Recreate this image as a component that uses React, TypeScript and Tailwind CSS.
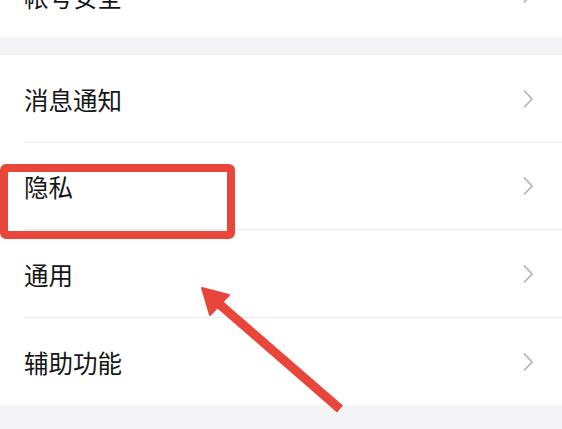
const groups = [['帐号安全'], ['消息通知', '隐私', '通用', '辅助功能']];

function Chevron() {
  return (
    <svg width="12" height="20" viewBox="0 0 12 20" className="text-[#b4b4b4]">
      <polyline points="2,1.5 10,10 2,18.5" fill="none" stroke="currentColor" strokeWidth="1.7" />
    </svg>
  );
}

function Row({ label, last, tall, top }: { label: string; last: boolean; tall?: boolean; top?: boolean }) {
  return (
    <div className="pl-6">
      <div
        className={`flex items-center justify-between pr-[28px] ${tall ? 'h-[88px]' : 'h-[87px]'} ${
          last ? '' : 'border-b border-[#ebebeb]'
        }`}
      >
        <span className={`${top ? 'pt-[8px]' : 'pt-[3px]'} text-[24.5px] text-[#161616]`}>{label}</span>
        <Chevron />
      </div>
    </div>
  );
}

export default function App() {
  return (
    <div
      className="relative h-[429px] w-[562px] overflow-hidden bg-[#f4f4f6]"
      style={{ fontFamily: '"Noto Sans CJK SC", "Noto Sans", sans-serif' }}
    >
      <div className="-mt-[50px] flex flex-col gap-[18px]">
        {groups.map((items, g) => (
          <div key={g} className="bg-white">
            {items.map((label, i) => (
              <Row
                key={label}
                label={label}
                last={i === items.length - 1}
                tall={g === 1 && i % 2 === 0}
                top={g === 0}
              />
            ))}
          </div>
        ))}
      </div>

      {/* annotation box */}
      <div className="absolute left-0 top-[164px] h-[75px] w-[235px] rounded-[6px] border-[8px] border-[#e8463b]" />

      {/* annotation arrow */}
      <svg className="absolute left-0 top-0" width="562" height="429" viewBox="0 0 562 429">
        <line x1="340" y1="409" x2="218" y2="303" stroke="#e8463b" strokeWidth="9" />
        <polygon points="202,288 229,295 210,315" fill="#e8463b" stroke="#e8463b" strokeWidth="2" strokeLinejoin="round" />
      </svg>
    </div>
  );
}
